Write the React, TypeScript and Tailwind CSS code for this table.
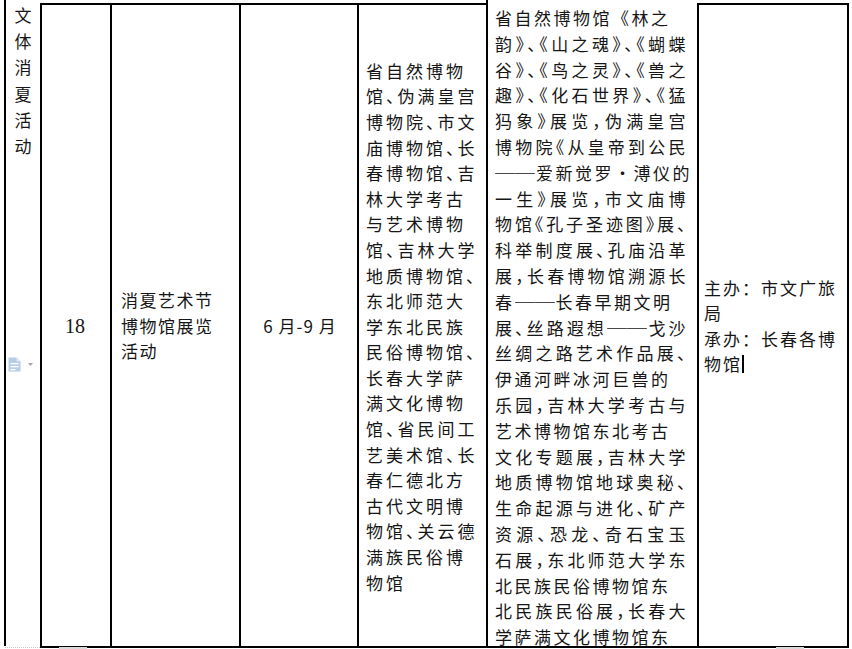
import React from "react";

const venues = [
  "省自然博物",
  "馆、伪满皇宫",
  "博物院、市文",
  "庙博物馆、长",
  "春博物馆、吉",
  "林大学考古",
  "与艺术博物",
  "馆、吉林大学",
  "地质博物馆、",
  "东北师范大",
  "学东北民族",
  "民俗博物馆、",
  "长春大学萨",
  "满文化博物",
  "馆、省民间工",
  "艺美术馆、长",
  "春仁德北方",
  "古代文明博",
  "物馆、关云德",
  "满族民俗博",
  "物馆",
];

// [text, stretched to full width]; "|" marks a long dash
const content: [string, boolean][] = [
  ["省自然博物馆《林之", false],
  ["韵》、《山之魂》、《蝴蝶", true],
  ["谷》、《鸟之灵》、《兽之", true],
  ["趣》、《化石世界》、《猛", true],
  ["犸象》展览，伪满皇宫", true],
  ["博物院《从皇帝到公民", true],
  ["|爱新觉罗•溥仪的", false],
  ["一生》展览，市文庙博", true],
  ["物馆《孔子圣迹图》展、", true],
  ["科举制度展、孔庙沿革", true],
  ["展，长春博物馆溯源长", true],
  ["春|长春早期文明", false],
  ["展、丝路遐想|戈沙", true],
  ["丝绸之路艺术作品展、", true],
  ["伊通河畔冰河巨兽的", false],
  ["乐园，吉林大学考古与", true],
  ["艺术博物馆东北考古", false],
  ["文化专题展，吉林大学", true],
  ["地质博物馆地球奥秘、", true],
  ["生命起源与进化、矿产", true],
  ["资源、恐龙、奇石宝玉", true],
  ["石展，东北师范大学东", true],
  ["北民族民俗博物馆东", false],
  ["北民族民俗展，长春大", true],
  ["学萨满文化博物馆东", false],
];

function Line({ text }: { text: string }) {
  const parts = text.split("|");
  return (
    <>
      {parts.map((p, i) => (
        <React.Fragment key={i}>
          {i > 0 && (
            <span className="inline-block tracking-[0px] scale-x-[1.17] origin-left mr-[7px]">──</span>
          )}
          {p}
        </React.Fragment>
      ))}
    </>
  );
}

function PasteIcon() {
  return (
    <div className="absolute left-[8px] top-[357px] flex items-center gap-[7px]">
      <svg width="13" height="15" viewBox="0 0 13 15">
        <path d="M0.5 0.5h8l4 4v10h-12z" fill="#b7cde6" />
        <path d="M8.5 0.5v4h4" fill="#dfe9f5" />
        <rect x="2.5" y="6" width="8" height="1.3" fill="#ffffff" />
        <rect x="2.5" y="9" width="8" height="1.3" fill="#ffffff" />
        <rect x="2.5" y="12" width="5" height="1.3" fill="#ffffff" />
      </svg>
      <svg width="5" height="3" viewBox="0 0 5 3">
        <path d="M0 0h5l-2.5 3z" fill="#a6a6a6" />
      </svg>
    </div>
  );
}

export default function App() {
  return (
    <div className="relative w-[852px] h-[649px] overflow-hidden bg-white text-[#161616] font-['Noto_Sans_CJK_SC',sans-serif] text-[17px]">
      <div className="flex items-start pl-[4px]">
        {/* category */}
        <div className="w-[36px] h-[646px] border-l-2 border-black flex flex-col items-center pt-[2px] leading-[26.2px]">
          {"文体消夏活动".split("").map((c, i) => (
            <span key={i}>{c}</span>
          ))}
        </div>

        {/* number */}
        <div className="w-[70px] h-[645px] mt-[3px] border-l-2 border-t-2 border-b-2 border-black flex items-center justify-center">
          <span className="font-['Liberation_Serif',serif] text-[20px] pr-[2px]">18</span>
        </div>

        {/* name */}
        <div className="w-[129px] h-[645px] mt-[3px] border-l-2 border-t-2 border-b-2 border-black flex flex-col justify-center pl-[9px] leading-[25.6px] tracking-[1.5px]">
          <div>消夏艺术节</div>
          <div>博物馆展览</div>
          <div>活动</div>
        </div>

        {/* date */}
        <div className="w-[118px] h-[645px] mt-[3px] border-l-2 border-t-2 border-b-2 border-black flex items-center justify-center">
          <span className="tracking-[1px] pl-[2px]">6 月-9 月</span>
        </div>

        {/* venues */}
        <div className="w-[129px] h-[645px] mt-[3px] border-l-2 border-t-2 border-b-2 border-black flex flex-col justify-center pl-[7px] leading-[25.6px] tracking-[3px] [font-feature-settings:'halt'] pt-[2px]">
          {venues.map((l, i) => (
            <div key={i} className="whitespace-nowrap">
              {l}
            </div>
          ))}
        </div>

        {/* content */}
        <div className="w-[211px] h-[648px] border-l-2 border-b-2 border-black flex flex-col pt-[5px] pl-[7px] pr-[9px] leading-[25.8px] tracking-[2.5px]">
          {content.map(([l, full], i) => (
            <div
              key={i}
              className={
                full
                  ? "whitespace-nowrap text-justify [text-align-last:justify] [font-feature-settings:'halt']"
                  : "whitespace-nowrap"
              }
            >
              <Line text={l} />
            </div>
          ))}
        </div>

        {/* organisers */}
        <div className="w-[152px] h-[645px] mt-[3px] border-l-2 border-r-2 border-t-2 border-b-2 border-black flex flex-col justify-center pl-[5px] leading-[25.5px] tracking-[2px]">
          <div>主办：市文广旅</div>
          <div>局</div>
          <div>承办：长春各博</div>
          <div className="flex items-center">
            <span>物馆</span>
            <span className="inline-block w-[2px] h-[18px] bg-black" />
          </div>
        </div>
      </div>

      <PasteIcon />

      {/* page corner marks */}
      <div className="absolute left-[5px] top-[647px] w-[35px] border-t border-dotted border-[#c8c8c8]" />
      <div className="absolute left-[59px] top-[647px] w-[28px] h-[2px] bg-[#d9d9d9]" />
      <div className="absolute left-[776px] top-[647px] w-[28px] h-[2px] bg-[#d9d9d9]" />
    </div>
  );
}
